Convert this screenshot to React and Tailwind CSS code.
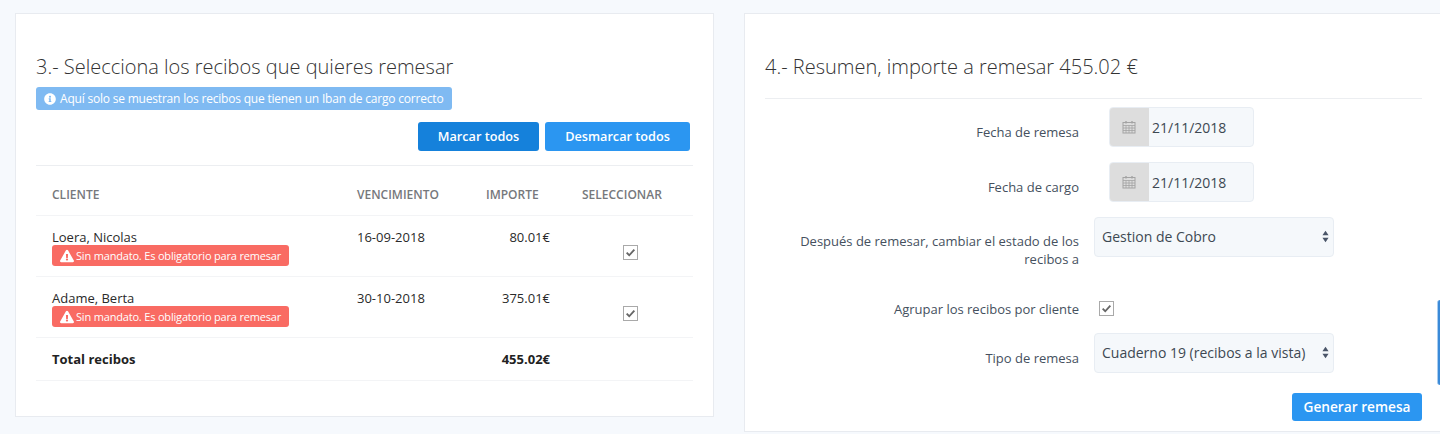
import React from 'react';
import { FaInfoCircle, FaExclamationTriangle } from 'react-icons/fa';

const Checkbox = () => (
  <span className="w-[15px] h-[15px] border border-[#a9a9a9] bg-white flex items-center justify-center">
    <svg viewBox="0 0 12 12" className="w-[11px] h-[11px]">
      <path d="M1.8 6.2 L4.6 9 L10.2 2.8" fill="none" stroke="#666" strokeWidth="2" />
    </svg>
  </span>
);

const CalendarIcon = () => (
  <svg viewBox="0 0 14 14" className="w-[14px] h-[14px]" fill="none" stroke="#a3a3a3" strokeWidth="1">
    <rect x="1" y="2.5" width="12" height="10.5" />
    <path d="M1 5.5h12M1 8h12M1 10.5h12M4 5.5V13M7 5.5V13M10 5.5V13" strokeWidth="0.8" />
    <path d="M4 1v2.5M10 1v2.5" strokeWidth="1.4" />
  </svg>
);

const SelectArrows = () => (
  <svg viewBox="0 0 8 14" className="w-[7px] h-[13px]" fill="#4a5568">
    <path d="M4 0.5 L7.5 5.5 H0.5 Z M4 13.5 L0.5 8.5 H7.5 Z" />
  </svg>
);

const MandateBadge = () => (
  <span className="flex items-center w-[237px] h-[21px] pl-2 gap-[2px] rounded-[3px] bg-[#f96b63] text-white text-[11px] tracking-[-0.18px] whitespace-nowrap">
    <FaExclamationTriangle className="w-[14px] h-[14px]" />
    Sin mandato. Es obligatorio para remesar
  </span>
);

const Row = ({ name, date, amount }) => (
  <div className="flex h-[61px] border-b border-[#f3f4f6] text-[13px] text-[#2a2a2a]">
    <div className="w-[305px] pl-4 pt-[13px] leading-[16px]">
      <div>{name}</div>
      <MandateBadge />
    </div>
    <div className="w-[129px] pl-[16px] pt-[13px] leading-[16px]">{date}</div>
    <div className="w-[80px] text-right pt-[13px] leading-[16px]">{amount}</div>
    <div className="flex-1 flex pt-[29px] pl-[73px]">
      <Checkbox />
    </div>
  </div>
);

const FormRow = ({ label, className, children }) => (
  <div className={`flex ${className}`}>
    <div className="w-[314px] text-right text-[13px] leading-[18px] text-[#45505e]">{label}</div>
    {children}
  </div>
);

const DateField = () => (
  <div className="ml-[30px] -mt-[16px] flex w-[145px] h-[40px] border border-[#e8edf3] rounded-[4px] bg-[#f5f8fb] overflow-hidden">
    <div className="w-[39px] pr-[2px] bg-[#dddddd] flex items-center justify-center">
      <CalendarIcon />
    </div>
    <div className="pl-[3px] pt-[1px] leading-[38px] text-[14px] text-[#3d4852]">21/11/2018</div>
  </div>
);

const SelectField = ({ value, className }) => (
  <div className={`ml-[15px] flex items-center justify-between w-[240px] h-[40px] pl-[7px] pr-[4px] pb-[1px] border border-[#e8edf3] rounded-[4px] bg-[#f5f8fb] text-[14px] text-[#3d4852] ${className}`}>
    {value}
    <SelectArrows />
  </div>
);

export default function App() {
  return (
    <div className="w-[1440px] h-[434px] overflow-hidden bg-[#f6f9fd] flex items-start pt-[13px] pl-[15px] gap-[30px] font-['Open_Sans',sans-serif] relative">
      <section className="w-[699px] h-[404px] shrink-0 bg-white border border-[#e8ebf0] pt-[39px] px-5">
        <h3 className="text-[20px] leading-[28px] font-light text-[#333]">3.- Selecciona los recibos que quieres remesar</h3>
        <div className="mt-[6px] w-[416px] h-[23px] flex items-center gap-1 pl-2 rounded-[3px] bg-[#7fbaf2] text-white text-[12px] tracking-[-0.2px]">
          <FaInfoCircle className="w-[12px] h-[12px]" />
          Aquí solo se muestran los recibos que tienen un Iban de cargo correcto
        </div>
        <div className="mt-3 pr-[3px] flex justify-end gap-[6px]">
          <button className="w-[121px] h-[29px] rounded-[3px] bg-[#1581db] text-white text-[12.7px] font-semibold">Marcar todos</button>
          <button className="w-[145px] h-[29px] rounded-[3px] bg-[#2b96f1] text-white text-[12.7px] font-semibold">Desmarcar todos</button>
        </div>
        <div className="mt-[14px] border-t border-[#eceef1]">
          <div className="flex h-[50px] pt-2 items-center border-b border-[#f3f4f6] text-[12px] font-semibold text-[#76787c]">
            <div className="w-[305px] pl-4">CLIENTE</div>
            <div className="w-[129px] pl-[16px]">VENCIMIENTO</div>
            <div className="w-[80px] pl-4">IMPORTE</div>
            <div className="flex-1 pl-[32px]">SELECCIONAR</div>
          </div>
          <Row name="Loera, Nicolas" date="16-09-2018" amount="80.01€" />
          <Row name="Adame, Berta" date="30-10-2018" amount="375.01€" />
          <div className="flex h-[43px] pt-[2px] items-center border-b border-[#f3f4f6] text-[13px] font-bold text-[#222]">
            <div className="w-[434px] pl-4">Total recibos</div>
            <div className="w-[80px] text-right">455.02€</div>
          </div>
        </div>
      </section>

      <section className="w-[697px] h-[419px] shrink-0 bg-white border border-r-0 border-[#e8ebf0] pt-[39px] pl-5 pr-[19px]">
        <h3 className="text-[20px] leading-[28px] font-light text-[#333]">4.- Resumen, importe a remesar 455.02 €</h3>
        <div className="mt-[17px] border-t border-[#eceef1]" />
        <FormRow label="Fecha de remesa" className="mt-[24px]"><DateField /></FormRow>
        <FormRow label="Fecha de cargo" className="mt-[31px]"><DateField /></FormRow>
        <FormRow label="Después de remesar, cambiar el estado de los recibos a" className="mt-[15px] pt-[15px]">
          <SelectField value="Gestion de Cobro" className="-mt-[15px]" />
        </FormRow>
        <FormRow label="Agrupar los recibos por cliente" className="mt-[32px]">
          <div className="ml-[20px] mt-[1px]"><Checkbox /></div>
        </FormRow>
        <FormRow label="Tipo de remesa" className="mt-[31px]">
          <SelectField value="Cuaderno 19 (recibos a la vista)" className="-mt-[16px]" />
        </FormRow>
        <div className="mt-[20px] flex justify-end">
          <button className="w-[130px] h-[28px] rounded-[3px] bg-[#2b96f1] text-white text-[13.7px] font-semibold">Generar remesa</button>
        </div>
      </section>
      <div className="absolute right-0 top-[300px] w-[3px] h-[85px] rounded-l-[3px] bg-[#3a8ad8] border-l border-[#a9cdf0]" />
    </div>
  );
}
